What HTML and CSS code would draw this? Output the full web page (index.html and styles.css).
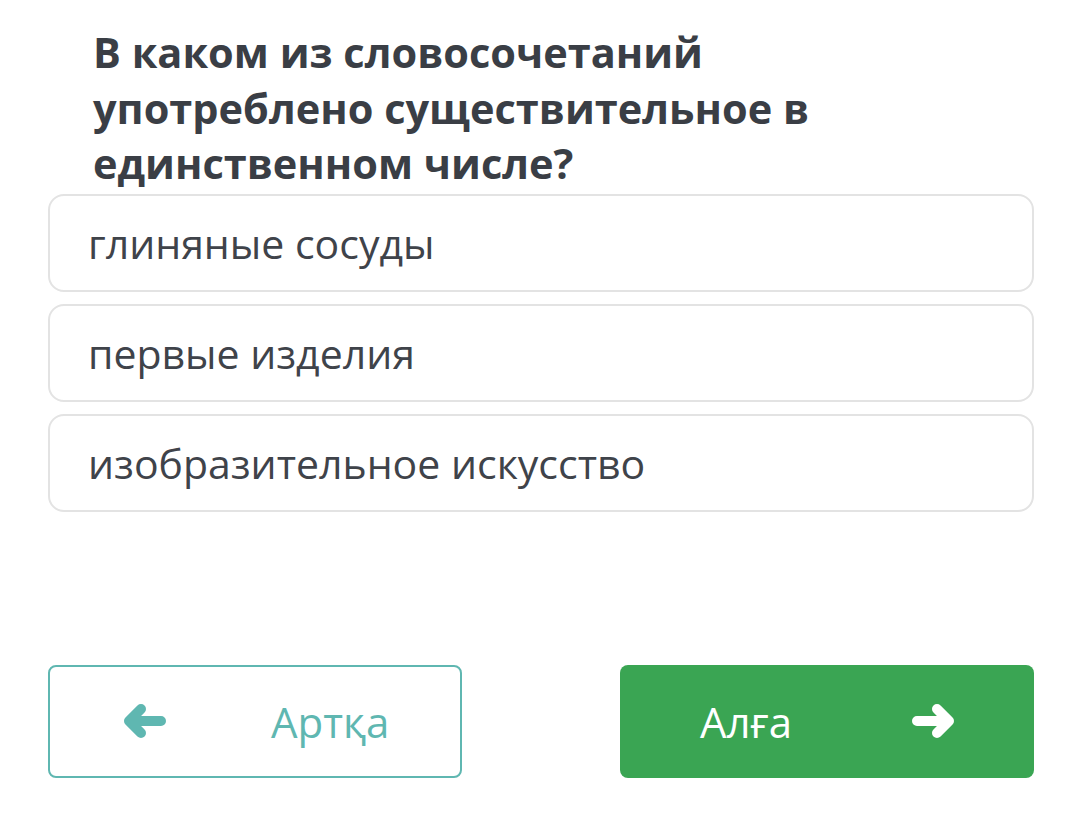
FILE: index.html
```html
<!DOCTYPE html>
<html lang="ru">
<head>
    <meta charset="UTF-8">
    <meta name="viewport" content="width=device-width, initial-scale=1.0">
    <title>Тест</title>
    <link rel="stylesheet" href="styles.css">
</head>
<body>
    <div class="quiz">
        <h2 class="question">В каком из словосочетаний употреблено существительное в единственном числе?</h2>

        <div class="answers">
            <div class="answer">глиняные сосуды</div>
            <div class="answer">первые изделия</div>
            <div class="answer">изобразительное искусство</div>
        </div>

        <div class="nav">
            <button class="btn btn-back">
                <svg class="arrow" viewBox="0 0 44 36" width="44" height="36">
                    <path d="M39 18H9M19 6L7 18L19 30" fill="none" stroke="currentColor" stroke-width="10" stroke-linecap="round" stroke-linejoin="round"/>
                </svg>
                <span>Артқа</span>
            </button>
            <button class="btn btn-next">
                <span>Алға</span>
                <svg class="arrow" viewBox="0 0 44 36" width="44" height="36">
                    <path d="M5 18H35M25 6L37 18L25 30" fill="none" stroke="currentColor" stroke-width="10" stroke-linecap="round" stroke-linejoin="round"/>
                </svg>
            </button>
        </div>
    </div>
</body>
</html>
```

FILE: styles.css
```css
body {
    margin: 0;
    background: #fff;
    font-family: "Open Sans", "Noto Sans", sans-serif;
    color: #3c4048;
}
.quiz {
    padding: 0 46px 0 48px;
}
.question {
    margin: 0;
    padding: 25px 0 0 45px;
    font-size: 41.5px;
    font-weight: 700;
    line-height: 55.5px;
    color: #3a3e45;
    max-width: 780px;
}
.answers {
    display: flex;
    flex-direction: column;
    gap: 12px;
    margin-top: 2px;
}
.answer {
    height: 94px;
    display: flex;
    align-items: center;
    padding-left: 38px;
    border: 2px solid #e3e3e3;
    border-radius: 16px;
    font-size: 41px;
    color: #3f434a;
}
.nav {
    display: flex;
    justify-content: space-between;
    margin-top: 153px;
}
.btn {
    width: 414px;
    height: 113px;
    border-radius: 8px;
    font-family: inherit;
    font-size: 42px;
    display: flex;
    align-items: center;
    cursor: pointer;
}
.btn-back {
    background: #fff;
    border: 2px solid #5fb7b1;
    color: #5fb7b1;
    padding: 0 0 0 72px;
    gap: 105px;
}
.btn-next {
    background: #3aa553;
    border: none;
    color: #fff;
    padding: 0 0 0 80px;
    gap: 120px;
}
```
